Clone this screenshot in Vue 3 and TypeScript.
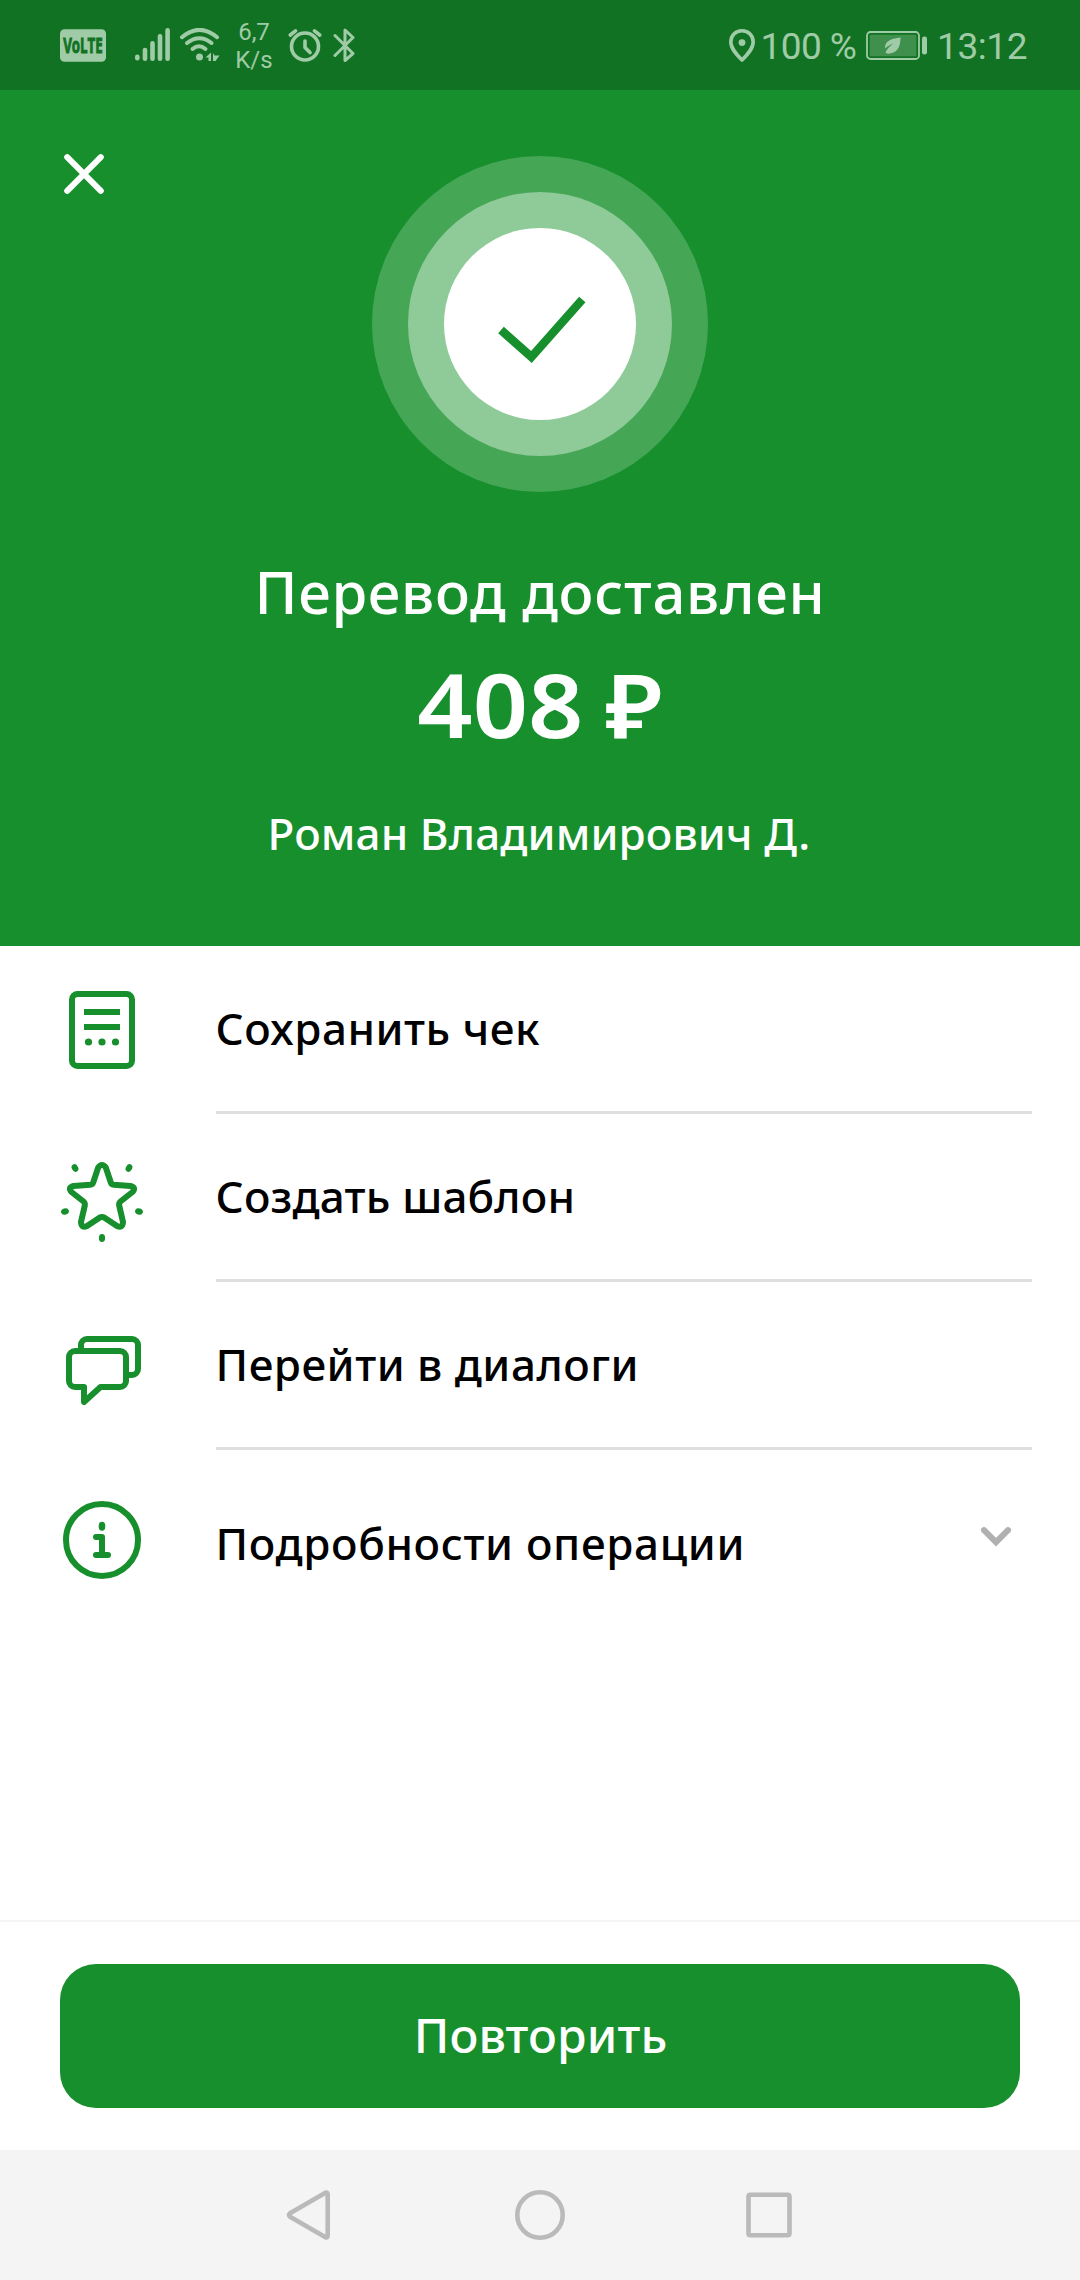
<script setup lang="ts">
interface Action {
  id: 'receipt' | 'star' | 'chat' | 'info'
  label: string
  spacing: number
}

const actions: Action[] = [
  { id: 'receipt', label: 'Сохранить чек', spacing: 0.53 },
  { id: 'star', label: 'Создать шаблон', spacing: 0.18 },
  { id: 'chat', label: 'Перейти в диалоги', spacing: 0.5 },
  { id: 'info', label: 'Подробности операции', spacing: 0.65 },
]
</script>

<template>
  <div class="screen">
    <header class="status">
      <svg class="volte" width="46" height="34" viewBox="0 0 46 34">
        <rect x="0" y="1.3" width="46" height="32.4" rx="4.5" fill="#a0cba7" />
        <text x="3.2" y="24.6" textLength="39.6" lengthAdjust="spacingAndGlyphs">VoLTE</text>
      </svg>
      <svg class="signal" width="36" height="34" viewBox="0 0 36 34" stroke="#a0cba7" stroke-width="4.6" stroke-linecap="round">
        <path d="M3.3 28.7V30.3M11 22V30.7M18.5 15.3V30.7M26 8.3V30.7M33.6 2.3V30.7" />
      </svg>
      <svg class="wifi" width="42" height="34" viewBox="0 0 42 34">
        <g fill="none" stroke="#a0cba7" stroke-width="4" stroke-linecap="round">
          <path d="M3 9.2Q20.5-5.5 38 9.2" />
          <path d="M8 15Q20.5 5.5 32.5 15" />
          <path d="M13.5 21Q20 15.5 26.5 21" />
        </g>
        <circle cx="20.5" cy="29" r="3.5" fill="#a0cba7" />
        <path d="M32 24.5V33H29.5V29.5H26.5ZM34 25L35.5 27.5H40.5L36.5 33H34Z" fill="#a0cba7" />
      </svg>
      <div class="speed"><span>6,7</span><span>K/s</span></div>
      <svg class="alarm" width="34" height="34" viewBox="0 0 34 34" fill="none" stroke="#a0cba7" stroke-width="3.6" stroke-linecap="round" stroke-linejoin="round">
        <circle cx="17" cy="18.5" r="13.5" />
        <path d="M17 13V19.5L22 24.5M2.3 7L7.5 2.8M26.5 2.8L31.7 7" />
      </svg>
      <svg class="bluetooth" width="23" height="34" viewBox="0 0 23 34" fill="none" stroke="#a0cba7" stroke-width="3" stroke-linecap="round" stroke-linejoin="round">
        <path d="M2 7.5L20 25.5L12 32.5V2L20 9.5L2 27.5" />
      </svg>
      <div class="right">
        <svg width="28" height="34" viewBox="0 0 28 34">
          <path d="M14 2.8C7.5 2.8 2.8 7.6 2.8 14C2.8 20.5 8.5 26.5 14 32C19.5 26.5 25.2 20.5 25.2 14C25.2 7.6 20.5 2.8 14 2.8Z" fill="none" stroke="#a0cba7" stroke-width="3.6" stroke-linejoin="round" />
          <circle cx="14" cy="14.6" r="3.4" fill="#a0cba7" />
        </svg>
        <span class="percent">100 %</span>
        <svg class="battery" width="62" height="34" viewBox="0 0 62 34">
          <rect x="1" y="4" width="52" height="27" rx="3.5" fill="none" stroke="#a0cba7" stroke-width="1.8" />
          <rect x="3.7" y="6.8" width="46.6" height="21.4" rx="1" fill="#3f8f4d" />
          <path d="M34.5 9.5C26 10.5 18.5 12.5 19 20.5C21.5 18.5 24 16.5 27 15.5C23.5 18.5 21 21 19.5 24.5C20.5 26 24 26 27.5 24.5C32.5 22 34.5 17 34.5 9.5Z" fill="#a0cba7" />
          <rect x="56" y="8.5" width="5" height="18" rx="2.3" fill="#a0cba7" />
        </svg>
        <span class="time">13:12</span>
      </div>
    </header>

    <section class="hero">
      <div class="top">
        <button class="close" aria-label="Закрыть">
          <svg width="48" height="48" viewBox="0 0 48 48" stroke="#fff" stroke-width="6" stroke-linecap="round">
            <path d="M7.2 7.2L40.8 40.8M40.8 7.2L7.2 40.8" />
          </svg>
        </button>
        <svg class="badge" width="336" height="336" viewBox="0 0 336 336">
          <circle cx="168" cy="168" r="168" fill="#45a656" />
          <circle cx="168" cy="168" r="132" fill="#8fca99" />
          <circle cx="168" cy="168" r="96" fill="#fff" />
          <path d="M129 174L159.4 201L210.3 143.5" fill="none" stroke="#178f2c" stroke-width="8.5" />
        </svg>
      </div>
      <h1>Перевод доставлен</h1>
      <p class="amount">408 ₽</p>
      <p class="name">Роман Владимирович Д.</p>
    </section>

    <main class="list">
      <div v-for="a in actions" :key="a.id" class="row" :class="a.id">
        <svg class="icon" width="84" height="84" viewBox="0 -0.5 84 84" fill="none" stroke="#178f2c" stroke-width="6" stroke-linejoin="round">
          <template v-if="a.id === 'receipt'">
            <rect x="12" y="7.5" width="60" height="72" rx="5.5" />
            <path d="M24 25.5H60M24 40.5H60" />
            <g fill="#178f2c" stroke="none">
              <circle cx="28.5" cy="55.5" r="3.6" /><circle cx="42" cy="55.5" r="3.6" /><circle cx="55.5" cy="55.5" r="3.6" />
            </g>
          </template>
          <template v-else-if="a.id === 'star'">
            <path d="M38.2 13Q42 8 45.8 13L50.8 28Q51.5 30 53.8 30.3L70.5 31.5Q76.5 33 72.5 37.5L60.5 47Q58.8 48.5 59.2 51L63 67.5Q62.8 74 57 71.5L44.5 63.2Q42 61.8 39.5 63.2L27 71.5Q21.2 74 21 67.5L24.8 51Q25.2 48.5 23.5 47L11.5 37.5Q7.5 33 13.5 31.5L30.2 30.3Q32.5 30 33.2 28Z" />
            <g fill="#178f2c" stroke="none">
              <ellipse cx="15" cy="13.5" rx="3.1" ry="4" transform="rotate(-30 15 13.5)" />
              <ellipse cx="69" cy="13.5" rx="3.1" ry="4" transform="rotate(30 69 13.5)" />
              <ellipse cx="5" cy="57" rx="3.1" ry="4" transform="rotate(70 5 57)" />
              <ellipse cx="79" cy="57" rx="3.1" ry="4" transform="rotate(-70 79 57)" />
              <ellipse cx="42" cy="83.5" rx="3.1" ry="4" />
            </g>
          </template>
          <template v-else-if="a.id === 'chat'">
            <path d="M15 28.5H60a6 6 0 0 1 6 6V58.5a6 6 0 0 1-6 6H40.5L24 79.5V64.5H15a6 6 0 0 1-6-6V34.5a6 6 0 0 1 6-6Z" />
            <path d="M21 28V22.5a6 6 0 0 1 6-6H72a6 6 0 0 1 6 6V46.5a6 6 0 0 1-6 6H67" />
          </template>
          <template v-else>
            <circle cx="42" cy="39.5" r="36" />
            <ellipse cx="42" cy="25.8" rx="3.3" ry="4.5" fill="#178f2c" stroke="none" />
            <path d="M36 36.5H42V54.5M36 54.5H48" stroke-linecap="round" />
          </template>
        </svg>
        <span class="label" :style="{ letterSpacing: a.spacing + 'px' }">{{ a.label }}</span>
        <svg v-if="a.id === 'info'" class="chevron" width="30" height="20" viewBox="0 0 30 20" fill="none" stroke="#b0b0b0" stroke-width="6" stroke-linecap="round">
          <path d="M3 3.2L15 15.2L27 3.2" />
        </svg>
      </div>
    </main>

    <footer class="actions">
      <button class="repeat">Повторить</button>
    </footer>

    <nav class="nav">
      <svg width="50" height="50" viewBox="0 0 50 50"><path d="M41.5 2.8Q43.7 2.2 43.7 4.5V45.5Q43.7 47.8 41.5 47.2L6 26.7Q4 25 6 23.3Z" /></svg>
      <svg width="50" height="50" viewBox="0 0 50 50"><circle cx="25" cy="25" r="22.7" /></svg>
      <svg width="50" height="50" viewBox="0 0 50 50"><rect x="2.5" y="4.8" width="41" height="40.5" rx="1.8" /></svg>
    </nav>
  </div>
</template>

<style>
body {
  margin: 0;
}
</style>

<style scoped>
.screen {
  width: 1080px;
  height: 2280px;
  display: flex;
  flex-direction: column;
  background: #fff;
  font-family: "Noto Sans", "Open Sans", sans-serif;
  overflow: hidden;
}
svg {
  display: block;
  flex: none;
}
button {
  border: 0;
  padding: 0;
  background: none;
  font: inherit;
}
h1, p {
  margin: 0;
}
.status {
  box-sizing: border-box;
  height: 90px;
  flex: none;
  padding: 0 51px 0 59.5px;
  display: flex;
  align-items: center;
  background: #127224;
  color: #a0cba7;
  font-family: Roboto, sans-serif;
}
.volte {
  overflow: visible;
}
.volte text {
  font: 700 21.5px "Open Sans", sans-serif;
  fill: #127224;
  stroke: #127224;
  stroke-width: 1px;
}
.signal {
  margin-left: 28.5px;
}
.wifi {
  margin-left: 9px;
}
.speed {
  display: flex;
  flex-direction: column;
  align-items: center;
  width: 40px;
  margin-left: 13px;
  padding-top: 2px;
  font-size: 24px;
  line-height: 28px;
}
.alarm {
  margin-left: 14px;
}
.bluetooth {
  margin-left: 11px;
}
.right {
  display: flex;
  align-items: center;
  margin-left: auto;
  font-size: 37px;
  line-height: 44px;
}
.percent {
  margin-left: 4.5px;
  width: 105.5px;
  letter-spacing: -0.6px;
  white-space: pre;
  padding-top: 3px;
}
.time {
  margin-left: 9px;
  width: 92px;
  letter-spacing: -0.4px;
  padding-top: 3px;
}
.hero {
  box-sizing: border-box;
  height: 856px;
  flex: none;
  padding-top: 66px;
  background: #178f2c;
  color: #fff;
  text-align: center;
}
.top {
  display: grid;
  grid-template-columns: 1fr 336px 1fr;
  align-items: start;
}
.close {
  width: 48px;
  margin: -6px 0 0 60px;
}
h1 {
  margin-top: 60px;
  font-weight: 500;
  font-size: 58px;
  line-height: 80px;
  letter-spacing: 0.69px;
}
.amount {
  margin-top: 22px;
  font-weight: 600;
  font-size: 88px;
  line-height: 100px;
  word-spacing: -3px;
  transform: scaleX(1.1);
}
.name {
  margin-top: 49px;
  padding-right: 2px;
  font-weight: 500;
  font-size: 44px;
  line-height: 60px;
  letter-spacing: 0.12px;
}
.list {
  flex: 1;
}
.row {
  display: flex;
  align-items: center;
  height: 163px;
  padding: 0 69px 5px 60px;
  background: linear-gradient(#dfdfdf, #dfdfdf) 216px 100% / 816px 3px no-repeat;
}
.row.info {
  height: 185px;
  padding-bottom: 0;
  background: none;
}
.icon {
  margin-top: 1px;
  overflow: visible;
}
.info .icon {
  margin: 0 0 1px;
}
.label {
  flex: 1;
  margin-left: 71.5px;
  font-weight: 500;
  font-size: 44px;
  line-height: 60px;
  color: #000;
}
.chevron {
  margin-bottom: 12px;
}
.actions {
  box-sizing: border-box;
  height: 230px;
  flex: none;
  padding: 42px 60px;
  border-top: 2px solid #f5f5f5;
}
.actions .repeat {
  display: block;
  box-sizing: border-box;
  width: 960px;
  height: 144px;
  padding: 0 0 3px 1px;
  border-radius: 36px;
  background: #178f2c;
  color: #fff;
  font-weight: 500;
  font-size: 48px;
  letter-spacing: 0.1px;
}
.nav {
  box-sizing: border-box;
  height: 130px;
  flex: none;
  padding: 0 284px;
  display: flex;
  align-items: center;
  justify-content: space-between;
  background: #f4f4f4;
}
.nav svg {
  fill: none;
  stroke: #bababa;
  stroke-width: 4.6px;
  stroke-linejoin: round;
}
</style>
